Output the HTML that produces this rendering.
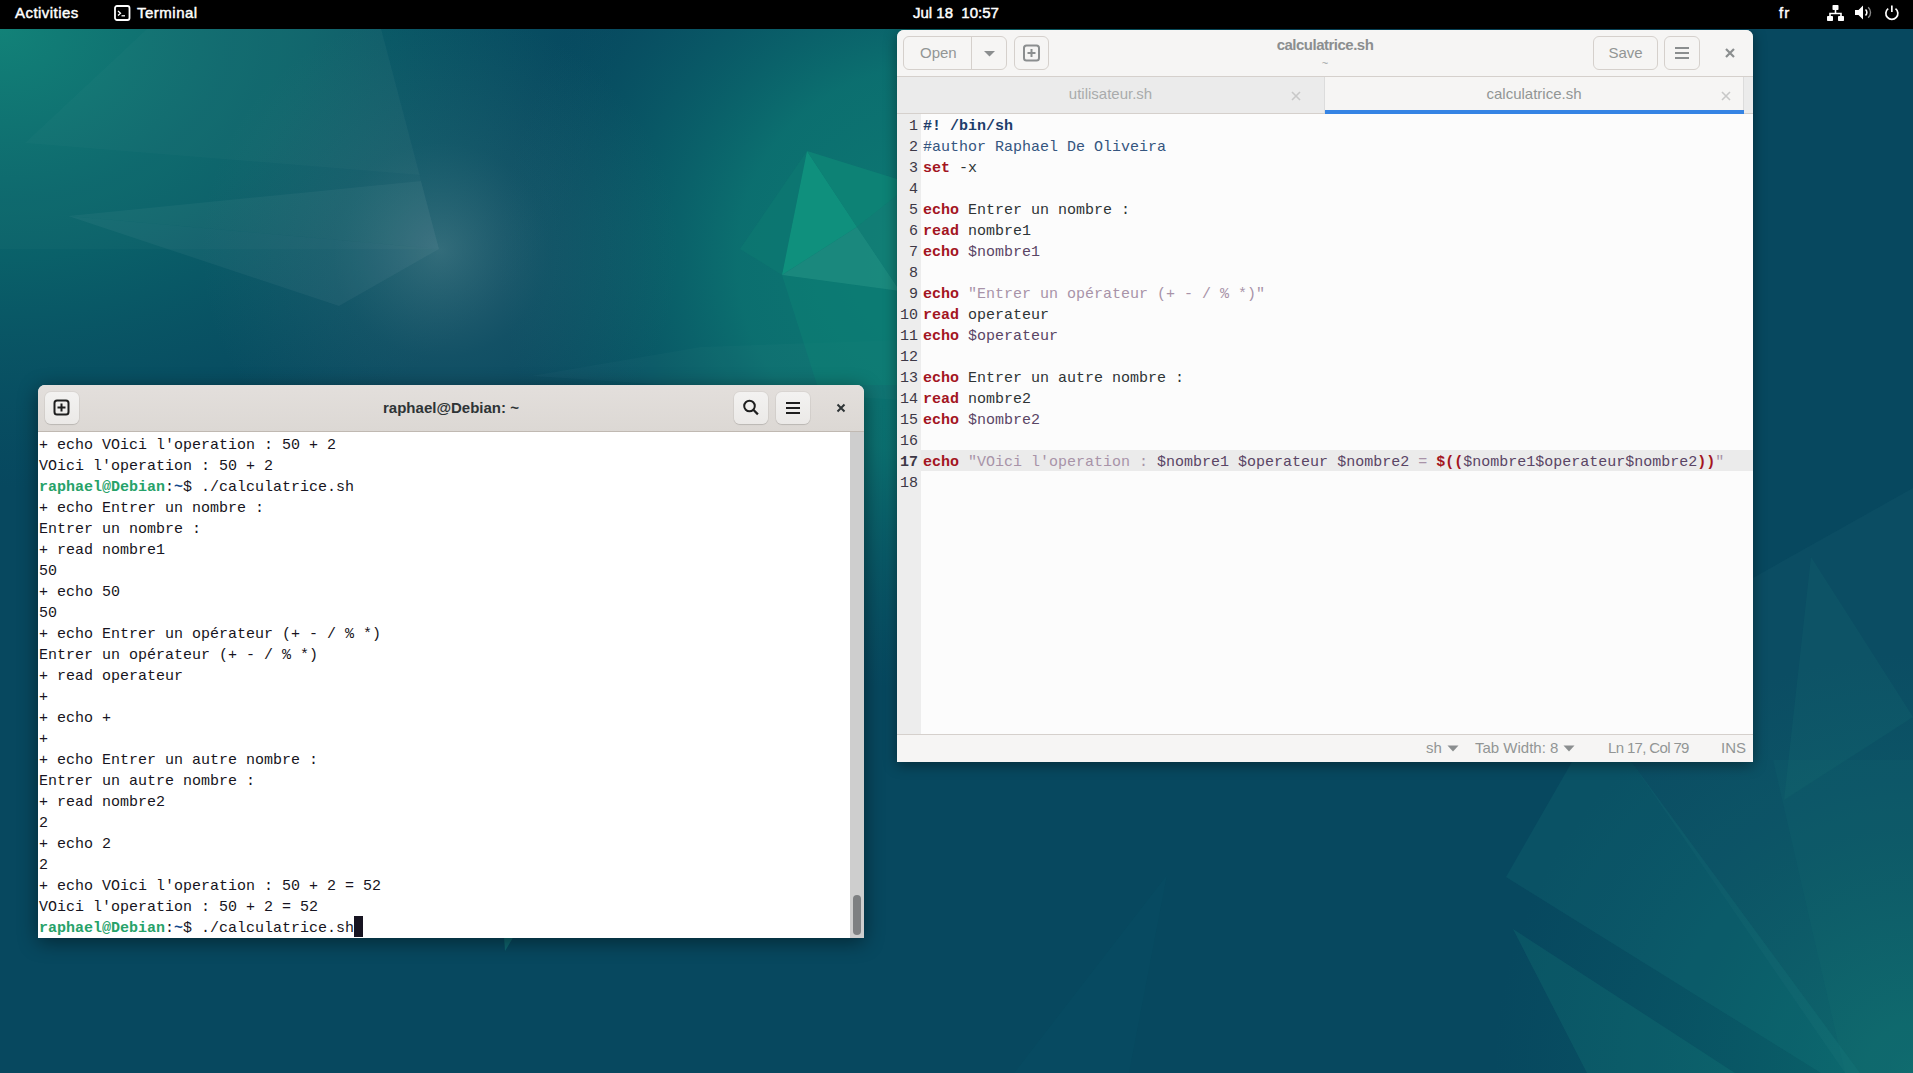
<!DOCTYPE html>
<html><head><meta charset="utf-8">
<style>
*{margin:0;padding:0;box-sizing:border-box}
html,body{width:1913px;height:1073px;overflow:hidden}
body{position:relative;font-family:"Liberation Sans",sans-serif;background:#08506a}
#wall{position:absolute;left:0;top:0;width:1913px;height:1073px}
#topbar{position:absolute;left:0;top:0;width:1913px;height:29px;background:#000;color:#fff;font-size:15px;font-weight:normal;-webkit-text-stroke:0.45px #fff}
#topbar .t{position:absolute;top:4px;white-space:nowrap}
.win{position:absolute;overflow:hidden}
#term{left:38px;top:385px;width:826px;height:553px;border-radius:7px 7px 0 0;background:#fff;box-shadow:0 4px 20px rgba(0,0,0,.45)}
#term .hdr{position:absolute;left:0;top:0;width:100%;height:47px;background:linear-gradient(#e3dfdc,#dcd8d4);border-bottom:1px solid #c0b9b2}
#term .body{position:absolute;left:0;top:47px;width:812px;height:506px;font-family:"Liberation Mono",monospace;font-size:15px;line-height:21px;color:#171421;white-space:pre;padding-left:1px;padding-top:3px}
#term .sb{position:absolute;left:812px;top:47px;width:14px;height:506px;background:#cecece}
#term .thumb{position:absolute;left:3px;top:463px;width:8px;height:40px;border-radius:4px;background:#7e8082}
.tbtn{position:absolute;top:7px;width:34px;height:32px;border-radius:6px;background:linear-gradient(#f3f2f1,#ebe9e7);box-shadow:0 1px 1px rgba(0,0,0,.12),0 0 0 1px rgba(0,0,0,.04)}
.g{color:#26a269;font-weight:bold}
.bl{color:#12488b;font-weight:bold}
#gedit{left:897px;top:30px;width:856px;height:732px;border-radius:7px 7px 0 0;background:#f6f5f4;box-shadow:0 3px 14px rgba(0,0,0,.4)}
#gedit .hdr{position:absolute;left:0;top:0;width:100%;height:47px;background:#f6f5f4;border-bottom:1px solid #d5d0cc}
.gbtn{position:absolute;top:6px;height:34px;border:1px solid #d5d0cc;border-radius:6px;background:#f6f5f4;color:#929595;font-size:15px;text-align:center;line-height:32px}
#gedit .tabs{position:absolute;left:0;top:47px;width:100%;height:37px;background:#ebebeb;border-bottom:1px solid #d5d0cc}
#gedit .tab{position:absolute;top:0;height:36px;color:#929595;font-size:15px;text-align:center;line-height:34px}
#gedit .code{position:absolute;left:0;top:84px;width:856px;height:620px;background:#fcfcfc}
#gedit .gut{position:absolute;left:0;top:0;width:24px;height:620px;background:#ededed;font-family:"Liberation Mono",monospace;font-size:15px;line-height:21px;color:#3d3846;text-align:right;white-space:pre;padding-top:2px;padding-right:3px}
#gedit .txt{position:absolute;left:26px;top:0;width:830px;height:620px;font-family:"Liberation Mono",monospace;font-size:15px;line-height:21px;color:#2e3436;white-space:pre;padding-top:2px}
#gedit .status{position:absolute;left:0;top:704px;width:100%;height:28px;background:#f6f5f4;border-top:1px solid #d5d0cc;color:#929595;font-size:15px}
.k{color:#a3151f;font-weight:bold}
.s{color:#a893a8}
.v{color:#5a4565}
.c{color:#35557f}
</style></head><body>
<svg id="wall" width="1913" height="1073" viewBox="0 0 1913 1073">
<defs>
<radialGradient id="r1" cx="0" cy="0" r="1" gradientUnits="userSpaceOnUse" gradientTransform="translate(0 28) scale(620 460)">
<stop offset="0" stop-color="#0e8076" stop-opacity="1"/>
<stop offset="0.5" stop-color="#0b6a6d" stop-opacity="0.72"/>
<stop offset="1" stop-color="#0a5a68" stop-opacity="0"/>
</radialGradient>
<radialGradient id="r2" cx="930" cy="260" r="430" gradientUnits="userSpaceOnUse">
<stop offset="0" stop-color="#0d7a73" stop-opacity="1"/>
<stop offset="0.45" stop-color="#0c7371" stop-opacity="0.9"/>
<stop offset="1" stop-color="#0a5e69" stop-opacity="0"/>
</radialGradient>
<radialGradient id="r3" cx="1913" cy="1073" r="420" gradientUnits="userSpaceOnUse">
<stop offset="0" stop-color="#0b6a6c" stop-opacity="0.9"/>
<stop offset="1" stop-color="#0a5e69" stop-opacity="0"/>
</radialGradient>
<radialGradient id="glow" cx="440" cy="250" r="240" gradientUnits="userSpaceOnUse">
<stop offset="0" stop-color="#8fb0b0" stop-opacity="0.32"/>
<stop offset="0.45" stop-color="#6a9496" stop-opacity="0.12"/>
<stop offset="1" stop-color="#5a8a8c" stop-opacity="0"/>
</radialGradient>
</defs>
<rect width="1913" height="1073" fill="#07485f"/>
<rect width="1913" height="1073" fill="url(#r1)"/>
<rect width="1913" height="1073" fill="url(#r2)"/>
<rect width="1913" height="1073" fill="url(#r3)"/>
<rect width="1913" height="1073" fill="url(#glow)"/>
<g fill="#ffffff">
<polygon points="0,28 381,28 439,249 0,249" fill-opacity="0.02"/>
<polygon points="148,28 381,28 420,175 25,143" fill-opacity="0.02"/>
<polygon points="68,216 421,181 439,249" fill-opacity="0.04"/>
<polygon points="68,216 439,249 339,306" fill-opacity="0.045"/>
<polygon points="531,376 700,347 900,340 900,400" fill-opacity="0.02"/>
</g>
<g>
<polygon points="807,151 740,249 782,275" fill="#0e7a72" fill-opacity="0.6"/>
<polygon points="782,275 900,291 900,385 817,385" fill="#0c8074" fill-opacity="0.55"/>
<polygon points="807,151 782,275 857,227" fill="#10937e" fill-opacity="0.9"/>
<polygon points="807,151 857,227 900,193 900,180" fill="#0e8576" fill-opacity="0.85"/>
<polygon points="782,275 857,227 900,291" fill="#1c8b7e" fill-opacity="0.9"/>
<polygon points="857,227 900,193 900,291" fill="#137f75" fill-opacity="0.85"/>
</g>
<g fill="#5aa8b0">
<polygon points="1500,720 1913,488 1913,1073 1845,1073 1630,760 1500,760" fill-opacity="0.05"/>
</g>
<g fill="#20a090">
<polygon points="1811,557 1784,800 1913,717" fill-opacity="0.08"/>
<polygon points="1506,877 1573,760 1630,760 1860,1073 1821,1073" fill-opacity="0.12"/>
<polygon points="1513,929 1587,1073 1735,1073" fill-opacity="0.15"/>
<polygon points="1773,760 1913,760 1913,1073 1845,1073" fill-opacity="0.06"/>
<polygon points="1014,1073 1167,875 1129,1073" fill-opacity="0.03"/>
<polygon points="504,936 514,936 505,951" fill-opacity="0.35"/>
</g>
</svg>

<div id="topbar">
<span class="t" style="left:15px;letter-spacing:0.45px">Activities</span>
<svg width="17" height="16" style="position:absolute;left:114px;top:5px"><rect x="1" y="1" width="14.5" height="14" rx="2" fill="none" stroke="#fff" stroke-width="1.8"/><path d="M4 6l2.5 2.2L4 10.4" fill="none" stroke="#fff" stroke-width="1.3"/><path d="M7.5 10.8h3.5" stroke="#fff" stroke-width="1.3"/></svg>
<span class="t" style="left:137px;letter-spacing:0.5px">Terminal</span>
<span class="t" style="left:913px">Jul 18&nbsp;&nbsp;10:57</span>
<span class="t" style="left:1779px;top:4px;letter-spacing:1px">fr</span>
<svg width="17" height="17" style="position:absolute;left:1827px;top:5px"><rect x="5.5" y="0" width="6" height="5" rx="0.8" fill="#fff"/><rect x="0" y="11" width="6" height="5" rx="0.8" fill="#fff"/><rect x="11" y="11" width="6" height="5" rx="0.8" fill="#fff"/><path d="M8.5 5v3.5M3 11V8.5h11V11" fill="none" stroke="#fff" stroke-width="1.6"/></svg>
<svg width="17" height="16" style="position:absolute;left:1855px;top:5px"><path d="M0 5h3.5L8 0.5v14L3.5 10H0z" fill="#fff"/><path d="M10.5 4.5a4 4 0 0 1 0 6" fill="none" stroke="#fff" stroke-width="1.6"/><path d="M13.2 2.2a7.2 7.2 0 0 1 0 10.6" fill="none" stroke="#888" stroke-width="1.4"/></svg>
<svg width="16" height="16" style="position:absolute;left:1884px;top:5px"><path d="M4.2 3.6a6 6 0 1 0 7.3 0" fill="none" stroke="#fff" stroke-width="1.7"/><path d="M7.85 0.5v6.5" stroke="#fff" stroke-width="1.7"/></svg>
</div>

<div class="win" id="term">
<div class="hdr">
<div class="tbtn" style="left:7px"><svg width="34" height="32" style="position:absolute;left:0;top:0"><rect x="9.5" y="8.5" width="14" height="14" rx="2.5" fill="none" stroke="#1e1e1e" stroke-width="2"/><path d="M16.5 11.5v8M12.5 15.5h8" stroke="#1e1e1e" stroke-width="2"/></svg></div>
<div style="position:absolute;left:0;width:826px;top:14px;text-align:center;font-size:15px;font-weight:bold;color:#2e3436">raphael@Debian: ~</div>
<div class="tbtn" style="left:696px"><svg width="34" height="32" style="position:absolute;left:0;top:0"><circle cx="15.5" cy="14" r="5.3" fill="none" stroke="#1e1e1e" stroke-width="2"/><path d="M19.3 17.8l4.6 4.6" stroke="#1e1e1e" stroke-width="2.2" stroke-linecap="butt"/></svg></div>
<div class="tbtn" style="left:738px"><svg width="34" height="32" style="position:absolute;left:0;top:0"><path d="M10 11h14M10 16h14M10 21h14" stroke="#1e1e1e" stroke-width="2"/></svg></div>
<svg width="12" height="12" style="position:absolute;left:797px;top:17px"><path d="M2.5 2.5l7 7M9.5 2.5l-7 7" stroke="#2e3436" stroke-width="2"/></svg>
</div>
<div class="body">+ echo VOici l'operation : 50 + 2
VOici l'operation : 50 + 2
<span class="g">raphael@Debian</span>:<span class="bl">~</span>$ ./calculatrice.sh
+ echo Entrer un nombre :
Entrer un nombre :
+ read nombre1
50
+ echo 50
50
+ echo Entrer un opérateur (+ - / % *)
Entrer un opérateur (+ - / % *)
+ read operateur
+
+ echo +
+
+ echo Entrer un autre nombre :
Entrer un autre nombre :
+ read nombre2
2
+ echo 2
2
+ echo VOici l'operation : 50 + 2 = 52
VOici l'operation : 50 + 2 = 52
<span class="g">raphael@Debian</span>:<span class="bl">~</span>$ ./calculatrice.sh</div>
<div style="position:absolute;left:316px;top:531px;width:9px;height:21px;background:#171421"></div>
<div class="sb"><div class="thumb"></div></div>
</div>

<div class="win" id="gedit">
<div class="hdr">
<div class="gbtn" style="left:6px;width:104px;text-align:left"><span style="position:absolute;left:16px;top:0">Open</span><div style="position:absolute;left:67px;top:0;width:1px;height:32px;background:#d5d0cc"></div><svg width="14" height="8" style="position:absolute;left:79px;top:13px"><path d="M1 1h11l-5.5 5.5z" fill="#8b8e8f"/></svg></div>
<div class="gbtn" style="left:117px;width:35px"><svg width="35" height="34" style="position:absolute;left:-1px;top:-1px"><rect x="10" y="9.5" width="15" height="15" rx="2.5" fill="none" stroke="#8b8e8f" stroke-width="2"/><path d="M17.5 13v8M13.5 17h8" stroke="#8b8e8f" stroke-width="2"/></svg></div>
<div style="position:absolute;left:0;width:856px;top:6px;text-align:center;font-size:15px;font-weight:bold;color:#8b8e8f;letter-spacing:-0.5px">calculatrice.sh</div>
<div style="position:absolute;left:0;width:856px;top:27px;text-align:center;font-size:11px;color:#a0a3a4">~</div>
<div class="gbtn" style="left:696px;width:65px">Save</div>
<div class="gbtn" style="left:767px;width:36px"><svg width="36" height="34" style="position:absolute;left:-1px;top:-1px"><path d="M11 12h14M11 17h14M11 22h14" stroke="#8b8e8f" stroke-width="2"/></svg></div>
<svg width="12" height="12" style="position:absolute;left:827px;top:17px"><path d="M2 2l8 8M10 2l-8 8" stroke="#8b8e8f" stroke-width="2.2"/></svg>
</div>
<div class="tabs">
<div class="tab" style="left:0;width:427px;color:#a9abac">utilisateur.sh<svg width="10" height="10" style="position:absolute;left:394px;top:14px"><path d="M1 1l8 8M9 1l-8 8" stroke="#c8c8c8" stroke-width="1.6"/></svg></div>
<div class="tab" style="left:427px;width:420px;background:#f6f5f4;border-left:1px solid #dcdcdc;border-right:1px solid #dcdcdc">calculatrice.sh<svg width="10" height="10" style="position:absolute;left:396px;top:14px"><path d="M1 1l8 8M9 1l-8 8" stroke="#c8c8c8" stroke-width="1.6"/></svg><div style="position:absolute;left:0;bottom:-1px;width:419px;height:4px;background:#3584e4"></div></div>
</div>
<div class="code">
<div style="position:absolute;left:24px;top:336px;width:832px;height:21px;background:#ebebeb"></div>
<div class="gut">1
2
3
4
5
6
7
8
9
10
11
12
13
14
15
16
<b>17</b>
18</div>
<div class="txt"><span class="c" style="font-weight:bold;color:#1d3d6b">#! /bin/sh</span>
<span class="c" style="font-weight:normal">#author Raphael De Oliveira</span>
<span class="k">set</span> -x

<span class="k">echo</span> Entrer un nombre :
<span class="k">read</span> nombre1
<span class="k">echo</span> <span class="v">$nombre1</span>

<span class="k">echo</span> <span class="s">"Entrer un opérateur (+ - / % *)"</span>
<span class="k">read</span> operateur
<span class="k">echo</span> <span class="v">$operateur</span>

<span class="k">echo</span> Entrer un autre nombre :
<span class="k">read</span> nombre2
<span class="k">echo</span> <span class="v">$nombre2</span>

<span class="k">echo</span> <span class="s">"VOici l'operation : </span><span class="v">$nombre1</span> <span class="v">$operateur</span> <span class="v">$nombre2</span><span class="s"> = </span><span class="k">$((</span><span class="v">$nombre1$operateur$nombre2</span><span class="k">))</span><span class="s">"</span>
</div>
</div>
<div class="status">
<span style="position:absolute;left:529px;top:4px">sh</span><svg width="12" height="8" style="position:absolute;left:550px;top:10px"><path d="M0.5 0.5h11l-5.5 6z" fill="#8b8e8f"/></svg>
<span style="position:absolute;left:578px;top:4px">Tab Width: 8</span><svg width="12" height="8" style="position:absolute;left:666px;top:10px"><path d="M0.5 0.5h11l-5.5 6z" fill="#8b8e8f"/></svg>
<span style="position:absolute;left:711px;top:4px;letter-spacing:-0.65px">Ln 17, Col 79</span>
<span style="position:absolute;left:824px;top:4px">INS</span>
</div>
</div>
</body></html>
